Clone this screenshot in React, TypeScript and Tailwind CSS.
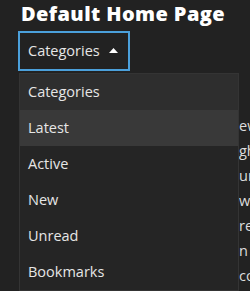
import { useState } from "react";

const items = ["Categories", "Latest", "Active", "New", "Unread", "Bookmarks"] as const;

// fragments of the settings copy that peek out to the right of the open menu
const behind = ["ew", "gh", "ur", "wh", "re", "n", "co"];

export default function App() {
  const [hover] = useState("Latest");

  return (
    <div className="h-[291px] w-[250px] overflow-hidden bg-[#222222] font-['Open_Sans',sans-serif] text-[#dddddd]">
      <h1 className="pl-[21px] pt-0.5 text-[20px] font-extrabold leading-[24px] tracking-[0.02em] text-white">
        Default Home Page
      </h1>

      <div className="relative ml-[18px] mt-[5px]">
        <button className="flex h-10 w-[112px] items-center gap-[9px] border-2 border-[#4ba0db] pl-2 text-[14.5px] text-[#e6e6e6]">
          Categories
          <svg width="9" height="5" viewBox="0 0 9 5" className="mt-[-1px]">
            <path d="M0 5 L4.5 0 L9 5 Z" fill="#ffffff" />
          </svg>
        </button>

        <div className="mt-[4px] flex flex-col pl-[221px] text-[14.5px] leading-[25px] text-[#dddddd]">
          <div className="h-[38px]" />
          {behind.map((t, i) => (
            <span key={i}>{t}</span>
          ))}
        </div>

        <ul className="absolute left-px top-[42px] w-[220px] border border-[#343434] bg-[#252525]">
          {items.map((label) => (
            <li
              key={label}
              className={
                label === "Categories"
                  ? "flex h-9 items-center bg-[#2e2e2e] pl-2 text-[14.5px] text-[#e6e6e6]"
                  : label === hover
                    ? "flex h-9 items-center bg-[#393939] pl-2 text-[14.5px] text-[#e6e6e6]"
                    : "flex h-9 items-center pl-2 text-[14.5px] text-[#e6e6e6]"
              }
            >
              {label}
            </li>
          ))}
        </ul>
      </div>
    </div>
  );
}
